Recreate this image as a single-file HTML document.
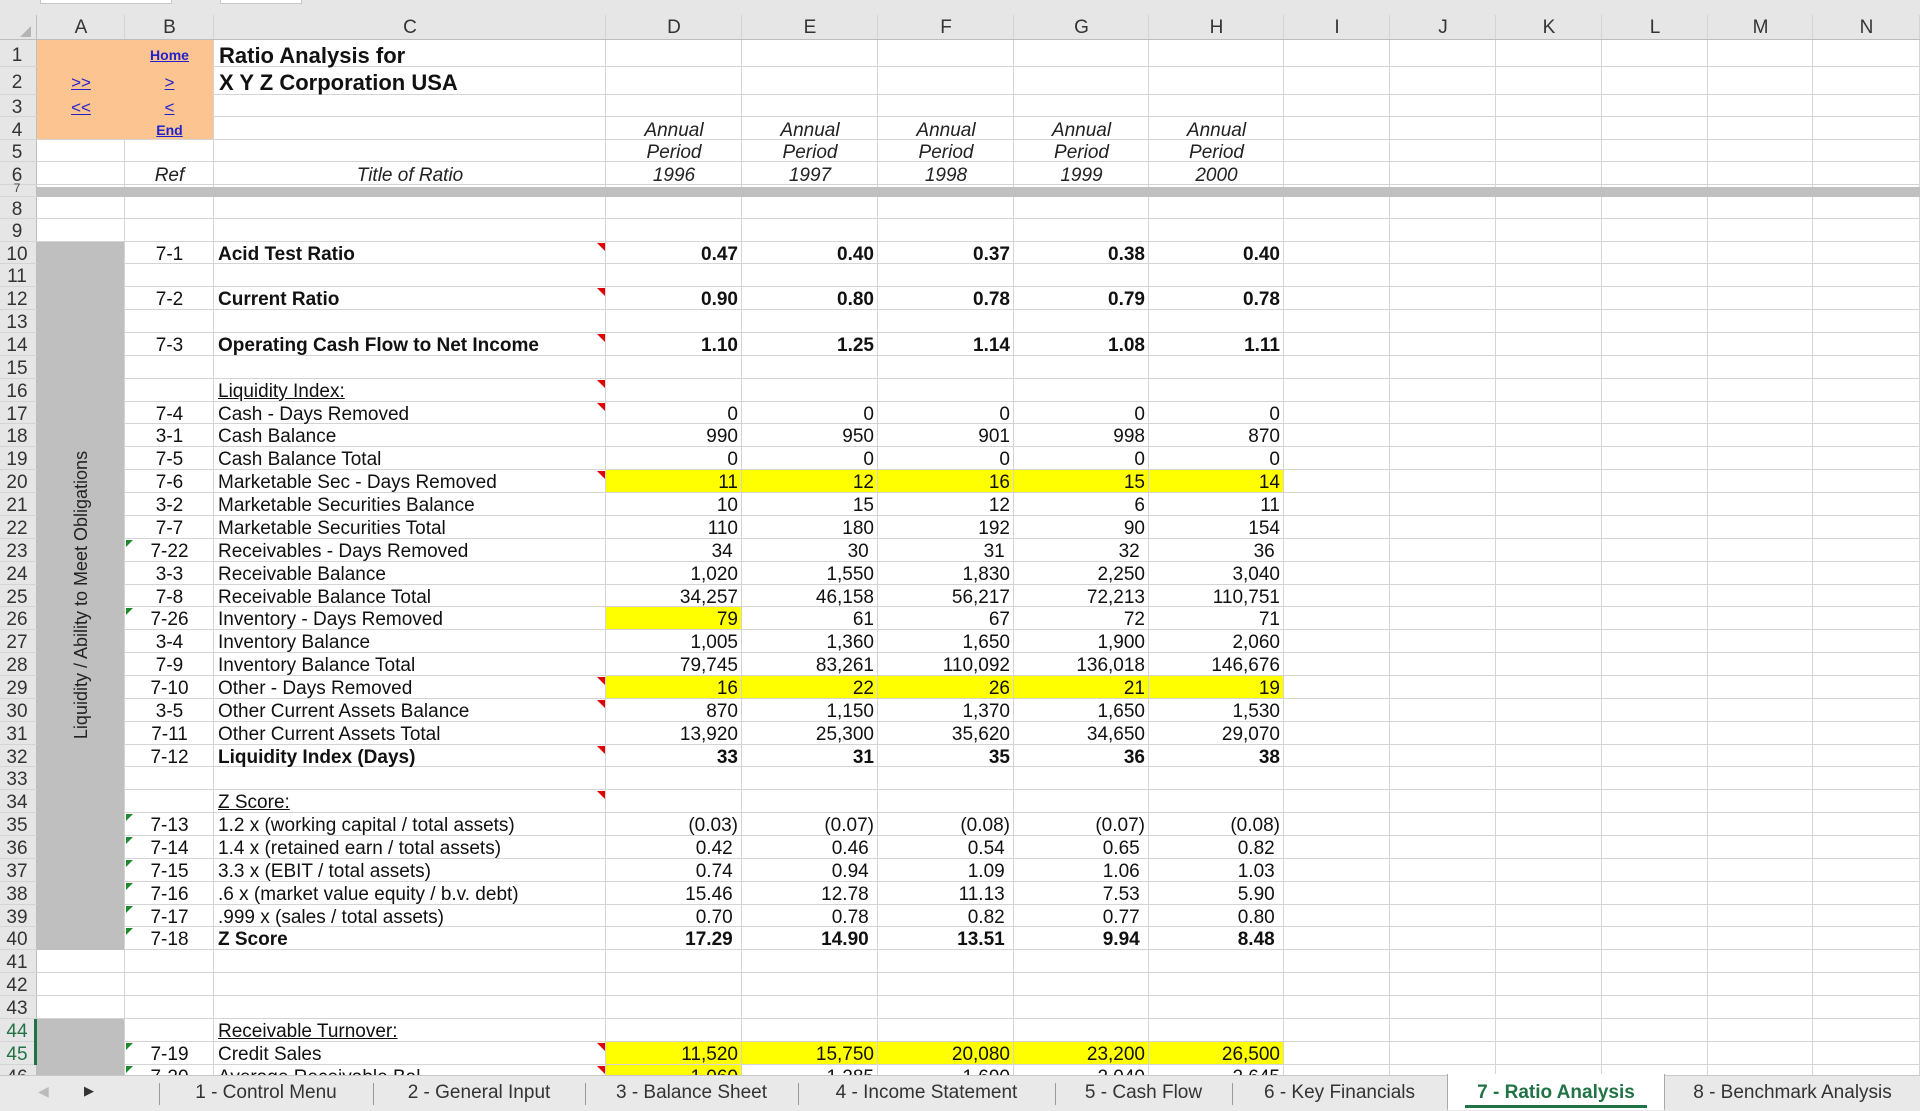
<!DOCTYPE html>
<html><head><meta charset="utf-8">
<style>
html,body{margin:0;padding:0;width:1920px;height:1110px;overflow:hidden;background:#fff;font-family:"Liberation Sans",Arial,sans-serif;}
#s{position:absolute;left:0;top:0;width:1920px;height:1110px;}
.c{position:absolute;white-space:nowrap;font-size:19px;color:#111;line-height:22px;box-sizing:border-box;overflow:visible}
.bg{position:absolute}
.vl{position:absolute;width:1px;background:#d4d4d4}
.hl{position:absolute;height:1px;background:#d4d4d4}
.tab{position:absolute;top:1078px;height:30px;line-height:30px;font-size:19px;color:#333;text-align:center}
</style></head><body><div id="s"></div>
<script>
var S=document.getElementById('s');
function el(cls,st,txt){var d=document.createElement('div');d.className=cls;d.style.cssText=st;if(txt!==undefined)d.innerHTML=txt;S.appendChild(d);return d;}
var cw=[37,88,89,392,136,136,136,135,135,106,106,106,106,105,107];
var cx=[0];for(var i=0;i<cw.length;i++)cx.push(cx[i]+cw[i]);
var rt={},rh={};
var fixed=[[1,40,27],[2,67,28],[3,95,22],[4,117,23],[5,140,22],[6,162,23],[7,185,12],[8,197,22],[9,219,22.6]];
fixed.forEach(function(f){rt[f[0]]=f[1];rh[f[0]]=f[2];});
for(var r=10;r<=47;r++){rt[r]=241.6+(r-10)*22.86;rh[r]=22.86;}
el('bg','left:0;top:0;width:1920px;height:40px;background:#e6e6e6');
el('bg','left:40px;top:0;width:130px;height:3px;background:#fff;border:1px solid #c6c6c6;border-top:none');
el('bg','left:220px;top:0;width:80px;height:3px;background:#fff;border:1px solid #c6c6c6;border-top:none');
el('bg','left:0;top:40px;width:37px;height:1035px;background:#e6e6e6');
el('bg','left:37px;top:40px;width:177px;height:100px;background:#fbc490');
el('bg','left:37px;top:241.6px;width:88px;height:708px;background:#bfbfbf');
el('bg','left:37px;top:1019px;width:88px;height:60px;background:#bfbfbf');
function yel(r,c1,c2){el('bg','left:'+cx[c1]+'px;top:'+rt[r]+'px;width:'+(cx[c2+1]-cx[c1])+'px;height:'+rh[r]+'px;background:#ffff00');}
yel(20,4,8);yel(26,4,4);yel(29,4,8);yel(45,4,8);yel(46,4,4);
for(var i=1;i<cx.length;i++){el('vl','left:'+(cx[i]-1)+'px;top:15px;height:1060px;'+(i==1?'background:#bdbdbd':''));}
for(var r=1;r<=47;r++){el('hl','left:0;top:'+(rt[r]-1)+'px;width:1920px');}
el('hl','left:0;top:39px;width:1920px;background:#bdbdbd');
el('bg','left:37px;top:187px;width:1883px;height:10px;background:#c0c0c0');
el('bg','left:37px;top:40px;width:176px;height:99px;background:#fbc490');
el('bg','left:37px;top:241.6px;width:87px;height:708px;background:#bfbfbf');
el('bg','left:37px;top:1019px;width:87px;height:56px;background:#bfbfbf');
var L=['A','B','C','D','E','F','G','H','I','J','K','L','M','N'];
for(var i=0;i<L.length;i++)el('c','left:'+cx[i+1]+'px;top:15px;width:'+cw[i+1]+'px;text-align:center;color:#333;line-height:25px;font-size:19px',L[i]);
el('bg','left:20px;top:26px;width:0;height:0;border-left:11px solid transparent;border-bottom:11px solid #b4b4b4');
for(var r=1;r<=46;r++){if(r==7){el('c','left:0;top:183px;width:34px;text-align:center;font-size:12px;line-height:10px;color:#444','7');continue;}
var col=(r==44||r==45)?'#217346':'#333';
el('c','left:0;top:'+(rt[r]+2)+'px;width:34px;height:'+rh[r]+'px;text-align:center;line-height:'+rh[r]+'px;color:'+col,r);}
el('bg','left:34px;top:'+rt[44]+'px;width:3px;height:45.7px;background:#217346');
function txt(r,c,t,st){el('c','left:'+cx[c]+'px;top:'+(rt[r]+2)+'px;width:'+cw[c]+'px;height:'+rh[r]+'px;line-height:'+rh[r]+'px;'+(st||''),t);}
var lnk='text-decoration:underline;text-align:center;font-size:15px;color:#2222cc';
txt(1,2,'Home',lnk+';font-weight:bold;font-size:14px');txt(2,1,'&gt;&gt;',lnk+';font-size:17px');txt(2,2,'&gt;',lnk+';font-size:17px');
txt(3,1,'&lt;&lt;',lnk+';font-size:17px');txt(3,2,'&lt;',lnk+';font-size:17px');txt(4,2,'End',lnk+';font-weight:bold;font-size:14px');
txt(1,3,'Ratio Analysis for','font-weight:bold;font-size:22px;padding-left:5px');
txt(2,3,'X Y Z Corporation USA','font-weight:bold;font-size:22px;padding-left:5px');
var yrs=['1996','1997','1998','1999','2000'];
for(var i=0;i<5;i++){txt(4,4+i,'Annual','font-style:italic;text-align:center;color:#222');txt(5,4+i,'Period','font-style:italic;text-align:center;color:#222');txt(6,4+i,yrs[i],'font-style:italic;text-align:center;color:#222');}
txt(6,2,'Ref','font-style:italic;text-align:center;color:#222');txt(6,3,'Title of Ratio','font-style:italic;text-align:center;color:#222');
var D=[
[10,'7-1','Acid Test Ratio',['0.47','0.40','0.37','0.38','0.40'],1],
[12,'7-2','Current Ratio',['0.90','0.80','0.78','0.79','0.78'],1],
[14,'7-3','Operating Cash Flow to Net Income',['1.10','1.25','1.14','1.08','1.11'],1],
[16,'','<u>Liquidity Index:</u>',[],0],
[17,'7-4','Cash - Days Removed',['0','0','0','0','0'],0],
[18,'3-1','Cash Balance',['990','950','901','998','870'],0],
[19,'7-5','Cash Balance Total',['0','0','0','0','0'],0],
[20,'7-6','Marketable Sec - Days Removed',['11','12','16','15','14'],0],
[21,'3-2','Marketable Securities Balance',['10','15','12','6','11'],0],
[22,'7-7','Marketable Securities Total',['110','180','192','90','154'],0],
[23,'7-22','Receivables - Days Removed',['34&nbsp;','30&nbsp;','31&nbsp;','32&nbsp;','36&nbsp;'],0],
[24,'3-3','Receivable Balance',['1,020','1,550','1,830','2,250','3,040'],0],
[25,'7-8','Receivable Balance Total',['34,257','46,158','56,217','72,213','110,751'],0],
[26,'7-26','Inventory - Days Removed',['79','61','67','72','71'],0],
[27,'3-4','Inventory Balance',['1,005','1,360','1,650','1,900','2,060'],0],
[28,'7-9','Inventory Balance Total',['79,745','83,261','110,092','136,018','146,676'],0],
[29,'7-10','Other - Days Removed',['16','22','26','21','19'],0],
[30,'3-5','Other Current Assets Balance',['870','1,150','1,370','1,650','1,530'],0],
[31,'7-11','Other Current Assets Total',['13,920','25,300','35,620','34,650','29,070'],0],
[32,'7-12','Liquidity Index (Days)',['33','31','35','36','38'],1],
[34,'','<u>Z Score:</u>',[],0],
[35,'7-13','1.2 x (working capital / total assets)',['(0.03)','(0.07)','(0.08)','(0.07)','(0.08)'],0],
[36,'7-14','1.4 x (retained earn / total assets)',['0.42&nbsp;','0.46&nbsp;','0.54&nbsp;','0.65&nbsp;','0.82&nbsp;'],0],
[37,'7-15','3.3 x (EBIT / total assets)',['0.74&nbsp;','0.94&nbsp;','1.09&nbsp;','1.06&nbsp;','1.03&nbsp;'],0],
[38,'7-16','.6 x (market value equity / b.v. debt)',['15.46&nbsp;','12.78&nbsp;','11.13&nbsp;','7.53&nbsp;','5.90&nbsp;'],0],
[39,'7-17','.999 x (sales / total assets)',['0.70&nbsp;','0.78&nbsp;','0.82&nbsp;','0.77&nbsp;','0.80&nbsp;'],0],
[40,'7-18','Z Score',['17.29&nbsp;','14.90&nbsp;','13.51&nbsp;','9.94&nbsp;','8.48&nbsp;'],1],
[44,'','<u>Receivable Turnover:</u>',[],0],
[45,'7-19','Credit Sales',['11,520','15,750','20,080','23,200','26,500'],0],
[46,'7-20','Average Receivable Bal',['1,060','1,285','1,690','2,040','2,645'],0]
];
D.forEach(function(d){var b=d[4]?'font-weight:bold;':'';
txt(d[0],2,d[1],'text-align:center');
txt(d[0],3,d[2],b+'padding-left:4px');
for(var i=0;i<d[3].length;i++)txt(d[0],4+i,d[3][i],b+'text-align:right;padding-right:4px');});
[10,12,14,16,17,20,29,30,32,34,45,46].forEach(function(r){el('bg','left:'+(cx[4]-9)+'px;top:'+(rt[r]+1)+'px;width:0;height:0;border-left:8px solid transparent;border-top:8px solid #e00000');});
[23,26,35,36,37,38,39,40,45,46].forEach(function(r){el('bg','left:'+(cx[2]+1)+'px;top:'+(rt[r]+1)+'px;width:0;height:0;border-right:7px solid transparent;border-top:7px solid #1e8a2e');});
el('c','left:81px;top:595px;transform:translate(-50%,-50%) rotate(-90deg);font-size:18px;color:#222','Liquidity / Ability to Meet Obligations');
el('bg','left:0;top:1075px;width:1920px;height:35px;background:#e9e9e9;border-top:1px solid #c8c8c8');
el('c','left:38px;top:1080px;color:#bbb;font-size:14px','&#9664;');
el('c','left:84px;top:1080px;color:#333;font-size:13px','&#9654;');
var tabs=[[159,373,'1 - Control Menu'],[373,585,'2 - General Input'],[585,798,'3 - Balance Sheet'],[798,1055,'4 - Income Statement'],[1055,1232,'5 - Cash Flow'],[1232,1447,'6 - Key Financials'],[1447,1665,'7 - Ratio Analysis'],[1665,1920,'8 - Benchmark Analysis']];
tabs.forEach(function(t,i){
if(i==6){el('bg','left:'+t[0]+'px;top:1074px;width:'+(t[1]-t[0])+'px;height:36px;background:#fff;border-left:1px solid #aaa;border-right:1px solid #aaa;box-sizing:border-box');
el('tab','left:'+t[0]+'px;width:'+(t[1]-t[0])+'px;color:#217346;font-weight:bold',t[2]);
el('bg','left:'+(t[0]+18)+'px;top:1105px;width:'+(t[1]-t[0]-36)+'px;height:3px;background:#217346');}
else{el('tab','left:'+t[0]+'px;width:'+(t[1]-t[0])+'px',t[2]);
if(i!=5)el('bg','left:'+t[1]+'px;top:1083px;width:1px;height:22px;background:#999');}
});
el('bg','left:159px;top:1083px;width:1px;height:22px;background:#999');
</script>
</body></html>
